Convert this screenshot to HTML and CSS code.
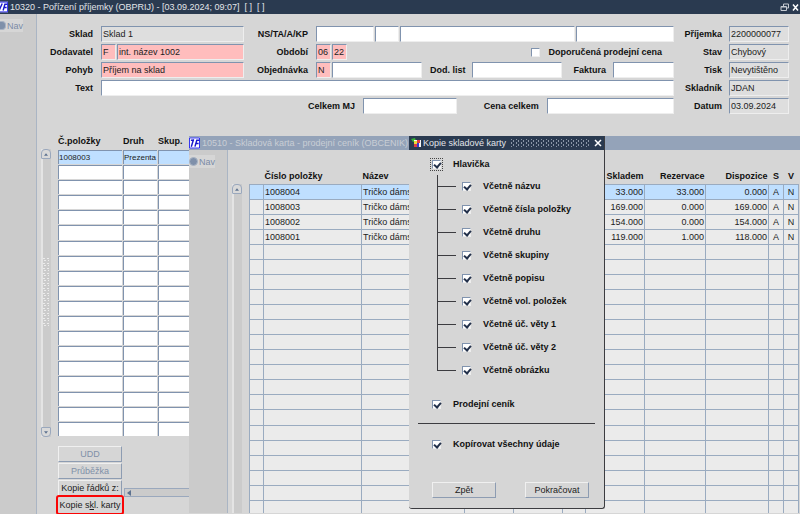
FILE: index.html
```
<!DOCTYPE html>
<html lang="cs">
<head>
    <meta charset="UTF-8">
    <meta name="viewport" content="width=device-width, initial-scale=1.0">
    <title>Pořízení příjemky</title>
    <link rel="stylesheet" href="styles.css">
</head>
<body>
<header class="titlebar">
    <svg class="logo" viewBox="3 0 9 12"><rect width="12" height="12" fill="#fff"/><path d="M5.500 2L2 10M6.500 10l2-7h3M7.500 6.500h3" stroke="#1a1acc" stroke-width="1.600" fill="none"/><path d="M0 .5h11.500v11H0" stroke="#1a1aee" fill="none"/></svg>
    <h1>10320 - Pořízení příjemky (OBPRIJ) - [03.09.2024; 09:07]&nbsp; [ ]&nbsp; [ ]</h1>
    <svg class="win-icons" viewBox="0 0 20 10"><path d="M3.500 4V2h5v4H7M1 4.500h5.500v4H1zM1 5h5" stroke="#c5cad2" fill="none"/><path d="M13 2.500l5 6M18 2.500l-5 6" stroke="#fff" stroke-width="1.500"/></svg>
</header>

<div class="app">
    <aside class="sidebar"><a href="#" class="nav-link nav-cut">Nav</a></aside>
    <main>
        <form class="receipt">
            <div class="fields">
                <div class="row">
                    <label for="sklad">Sklad</label>
                    <input id="sklad" class="gray" value="Sklad 1">
                    <label for="ns">NS/TA/A/KP</label>
                    <div class="group">
                        <input id="ns" class="w-ns"><input class="w-ta" aria-label="TA"><input class="w-a" aria-label="A"><input class="w-kp" aria-label="KP">
                    </div>
                </div>
                <div class="row">
                    <label for="dodavatel">Dodavatel</label>
                    <div class="group">
                        <input id="dodavatel" class="pink code" value="F"><input class="pink" aria-label="Název dodavatele" value="int. název 1002">
                    </div>
                    <label for="obdobi">Období</label>
                    <div class="group">
                        <input id="obdobi" class="pink code" value="06"><input class="pink code" aria-label="Rok" value="22">
                        <div class="check-right">
                            <input type="checkbox" id="cena">
                            <label for="cena">Doporučená prodejní cena</label>
                        </div>
                    </div>
                </div>
                <div class="row">
                    <label for="pohyb">Pohyb</label>
                    <input id="pohyb" class="pink" value="Příjem na sklad">
                    <label for="objednavka">Objednávka</label>
                    <div class="group">
                        <input id="objednavka" class="pink code" value="N"><input class="w-order" aria-label="Číslo objednávky">
                        <label for="list" class="w-label">Dod. list</label>
                        <input id="list" class="w-order">
                        <label for="faktura" class="w-label">Faktura</label>
                        <input id="faktura" class="w-invoice">
                    </div>
                </div>
                <div class="row row-text">
                    <label for="text">Text</label>
                    <input id="text">
                </div>
                <div class="row row-sum">
                    <label for="mj">Celkem MJ</label>
                    <input id="mj">
                    <label for="celkem">Cena celkem</label>
                    <input id="celkem">
                </div>
            </div>
            <div class="status">
                <label for="prijemka">Příjemka</label><input id="prijemka" class="gray" value="2200000077">
                <label for="stav">Stav</label><input id="stav" class="gray" value="Chybový">
                <label for="tisk">Tisk</label><input id="tisk" class="gray" value="Nevytištěno">
                <label for="skladnik">Skladník</label><input id="skladnik" class="gray" value="JDAN">
                <label for="datum">Datum</label><input id="datum" class="gray" value="03.09.2024">
            </div>
        </form>

        <div class="items">
            <div class="scroll">
                <span class="scroll-btn"><svg viewBox="0 0 6 4"><path d="M0 4l3-4 3 4z"/></svg></span>
                <span class="scroll-grip"></span>
                <span class="scroll-btn down"><svg viewBox="0 0 6 4"><path d="M0 0l3 4 3-4z"/></svg></span>
            </div>
            <table class="lines">
                <thead>
                    <tr><th>Č.položky</th><th>Druh</th><th>Skup.</th></tr>
                </thead>
                <tbody data-rows="19">
                    <tr class="selected"><td>1008003</td><td>Prezenta</td><td></td></tr>
                </tbody>
            </table>
        </div>

        <div class="actions">
            <div class="buttons">
                <button type="button" disabled>UDD</button>
                <button type="button" disabled>Průběžka</button>
                <button type="button">Kopie řádků z:</button>
                <button type="button" class="marked">Kopie s<u>k</u>l. karty</button>
            </div>
            <div class="hscroll"><svg viewBox="0 0 4 6"><path d="M4 0L0 3l4 3z"/></svg></div>
        </div>
    </main>
</div>

<!-- Window with the price list -->
<section class="window">
    <div class="titlebar inactive">
        <svg class="logo" viewBox="0 0 12 12"><rect width="12" height="12" fill="#fff"/><path d="M2 3h3.500M5 2L2.500 10M6.500 10l2-7h3M7.500 6.500h3" stroke="#1a1acc" stroke-width="1.600" fill="none"/><path d="M.5 .5h11v11H.5z" stroke="#1a1aee" fill="none"/></svg>
        <h2>10510 - Skladová karta - prodejní ceník (OBCENIK)</h2>
    </div>
    <div class="window-body">
        <aside class="sidebar"><a href="#" class="nav-link">Nav</a></aside>
        <div class="scroll">
            <span class="scroll-btn"><svg viewBox="0 0 6 4"><path d="M0 4l3-4 3 4z"/></svg></span>
        </div>
        <div class="prices-wrap">
            <table class="prices">
                <colgroup>
                    <col class="c-mark"><col class="c-number"><col><col class="c-mid"><col class="c-mid"><col class="c-small"><col class="c-stock"><col class="c-res"><col class="c-disp"><col class="c-flag"><col class="c-flag">
                </colgroup>
                <thead>
                    <tr><th></th><th>Číslo položky</th><th>Název</th><th></th><th></th><th></th><th class="num">Skladem</th><th class="num">Rezervace</th><th class="num">Dispozice</th><th class="mid">S</th><th class="mid">V</th></tr>
                </thead>
                <tbody data-rows="22">
                    <tr class="selected"><td></td><td>1008004</td><td>Tričko dámské</td><td></td><td></td><td></td><td class="num">33.000</td><td class="num">33.000</td><td class="num">0.000</td><td class="mid">A</td><td class="mid">N</td></tr>
                    <tr><td></td><td>1008003</td><td>Tričko dámské</td><td></td><td></td><td></td><td class="num">169.000</td><td class="num">0.000</td><td class="num">169.000</td><td class="mid">A</td><td class="mid">N</td></tr>
                    <tr><td></td><td>1008002</td><td>Tričko dámské</td><td></td><td></td><td></td><td class="num">154.000</td><td class="num">0.000</td><td class="num">154.000</td><td class="mid">A</td><td class="mid">N</td></tr>
                    <tr><td></td><td>1008001</td><td>Tričko dámské</td><td></td><td></td><td></td><td class="num">119.000</td><td class="num">1.000</td><td class="num">118.000</td><td class="mid">A</td><td class="mid">N</td></tr>
                </tbody>
            </table>
        </div>
    </div>
</section>

<!-- Copy dialog -->
<section class="dialog" role="dialog" aria-labelledby="dialog-title">
    <div class="titlebar">
        <svg class="java" viewBox="0 0 10 10"><path d="M0 1l4-1 1 3-3 1z" fill="#35b335"/><rect x="3" y="2" width="7" height="7" fill="#f4f4f4"/><path d="M3 3h3v3H3z" fill="#e8dc35"/><path d="M6 2h3v3H6z" fill="#e03a42"/><path d="M3 6h3v3H3z" fill="#e03a42"/><path d="M6 5h2v4H6z" fill="#3838cf"/></svg>
        <h2 id="dialog-title">Kopie skladové karty</h2>
        <span class="dots"></span>
        <svg class="close" viewBox="0 0 8 8"><path d="M1 1l6 6M7 1L1 7" stroke="#fff" stroke-width="1.500"/></svg>
    </div>
    <form class="dialog-body">
        <label class="option focused"><input type="checkbox" checked>Hlavička</label>
        <ul class="tree">
            <li><label><input type="checkbox" checked>Včetně názvu</label></li>
            <li><label><input type="checkbox" checked>Včetně čísla položky</label></li>
            <li><label><input type="checkbox" checked>Včetně druhu</label></li>
            <li><label><input type="checkbox" checked>Včetně skupiny</label></li>
            <li><label><input type="checkbox" checked>Včetně popisu</label></li>
            <li><label><input type="checkbox" checked>Včetně vol. položek</label></li>
            <li><label><input type="checkbox" checked>Včetně úč. věty 1</label></li>
            <li><label><input type="checkbox" checked>Včetně úč. věty 2</label></li>
            <li><label><input type="checkbox" checked>Včetně obrázku</label></li>
        </ul>
        <label class="option">
            <input type="checkbox" checked>Prodejní ceník
        </label>
        <hr>
        <label class="option">
            <input type="checkbox" checked>Kopírovat všechny údaje
        </label>
        <div class="dialog-buttons">
            <button type="button">Zpět</button>
            <button type="button">Pokračovat</button>
        </div>
    </form>
</section>

<script>
    // Fill the grids with empty rows
    document.querySelectorAll('tbody[data-rows]').forEach(function(body) {
        const columns = body.rows[0].cells.length;
        while (body.rows.length < Number(body.dataset.rows)) {
            const row = body.insertRow();
            for (let i = 0; i < columns; i++) {
                row.insertCell();
            }
        }
    });
</script>
</body>
</html>
```
FILE: styles.css
```
* {
    box-sizing: border-box;
}
body {
    margin: 0;
    height: 100vh;
    display: flex;
    flex-direction: column;
    position: relative;
    overflow: hidden;
    background: #d6d6d6;
    color: #1c1c22;
    font: 9px/12px "Liberation Sans", Arial, sans-serif;
}
label, th {
    font-weight: bold;
    color: #111;
    white-space: nowrap;
}
input, button {
    font: inherit;
    color: inherit;
}

/* Title bars */
.titlebar {
    display: flex;
    align-items: center;
    gap: 2px;
    height: 14px;
    flex: none;
    background: #2a3a50;
    color: #e2e5e9;
}
.titlebar h1, .titlebar h2 {
    margin: 0;
    font-size: 9px;
    line-height: 14px;
    font-weight: normal;
    white-space: nowrap;
}
.titlebar .logo {
    width: 8px;
    height: 12px;
}
.win-icons {
    width: 20px;
    height: 10px;
    margin-left: auto;
}

/* Main window */
.app {
    flex: 1;
    display: flex;
}
.sidebar {
    width: 37px;
    flex: none;
    padding-top: 5px;
    background: #cbcbcb;
    border-right: 1px solid #aab5c4;
}
.nav-link {
    display: flex;
    align-items: center;
    gap: 1px;
    width: 26px;
    height: 13px;
    background: #d6d6d6;
    color: #7a8ba6;
    text-decoration: none;
}
.nav-link::before {
    content: "";
    width: 7px;
    height: 7px;
    flex: none;
    border: 1px solid #a9b3c3;
    border-radius: 50%;
    background: #7f90aa;
}
.nav-cut {
    width: 23px;
}
.nav-cut::before {
    width: 5px;
    border-left: 0;
    border-radius: 0 4px 4px 0;
}
main {
    flex: 1;
    min-width: 0;
}

/* Form */
.receipt {
    display: flex;
    gap: 8px;
    padding: 12px 11px 0 0;
}
.fields {
    flex: 1;
    display: grid;
    gap: 2px;
}
.row {
    display: grid;
    grid-template-columns: 56px 143fr 56px 358fr;
    gap: 8px;
    align-items: center;
}
.row label, .status label {
    text-align: right;
}
.row-text {
    grid-template-columns: 56px 1fr;
}
.row-sum {
    grid-template-columns: 318px 95fr 74px 129fr;
}
.group {
    display: flex;
    align-items: center;
    gap: 1px;
}
input:not([type]) {
    width: 100%;
    min-width: 0;
    height: 16px;
    padding: 0 1px;
    border: 1px solid #eeeeee;
    border-top-color: #8093ae;
    border-left-color: #8093ae;
    border-radius: 0;
    background: #fff;
    outline: none;
}
input.gray {
    background: #dedede;
}
input.pink {
    background: #ffbdbd;
}
input.code {
    width: 15px;
    flex: none;
}
.group .w-ns {
    flex: 57;
}
.group .w-ta {
    flex: 21;
}
.group .w-a {
    flex: 180;
}
.group .w-kp {
    flex: 99;
}
.group .w-order {
    flex: 90;
}
.group .w-invoice {
    flex: 60;
}
.w-label {
    flex: 45;
    padding-right: 6px;
}
.check-right {
    display: flex;
    align-items: center;
    gap: 8px;
    margin-left: auto;
    margin-right: 12px;
}
.status {
    display: grid;
    grid-template-columns: 40px 60px;
    gap: 2px 7px;
    align-items: center;
}

/* Checkboxes */
input[type="checkbox"] {
    appearance: none;
    width: 9px;
    height: 9px;
    margin: 0;
    flex: none;
    position: relative;
    background: #fff;
    border: 1px solid #eeeeee;
    border-top-color: #8093ae;
    border-left-color: #8093ae;
}
input[type="checkbox"]:checked::after {
    content: "";
    position: absolute;
    left: 2px;
    top: 0;
    width: 3px;
    height: 5px;
    border: solid #22304a;
    border-width: 0 2px 2px 0;
    transform: rotate(40deg);
}

/* Item lines */
.items {
    display: flex;
    gap: 6px;
    margin-top: 20px;
    padding-left: 4px;
}
.scroll {
    display: flex;
    flex-direction: column;
    width: 10px;
    flex: none;
    background: #cbcbcb;
    border-left: 2px solid #e4e4e4;
}
.items .scroll {
    margin-top: 15px;
}
.scroll-btn {
    display: flex;
    align-items: center;
    justify-content: center;
    width: 10px;
    height: 10px;
    margin-left: -2px;
    background: #d9d9d9;
    border: 1px solid #9aa8bd;
    border-radius: 4px 4px 1px 1px;
}
.scroll-btn.down {
    border-radius: 1px 1px 4px 4px;
}
.scroll-btn svg {
    width: 4px;
    height: 3px;
    fill: #5d7290;
}
.scroll-grip {
    width: 6px;
    height: 70px;
    margin: auto 0;
    background: radial-gradient(circle, #ececec 1px, transparent 1px) 0 0 / 4px 5px,
        radial-gradient(circle, #ececec 1px, transparent 1px) 3px 3px / 4px 5px;
}
table {
    table-layout: fixed;
}
th, td {
    padding: 0 1px;
    text-align: left;
    font-size: 9px;
    line-height: 12px;
    white-space: nowrap;
    overflow: hidden;
}
.lines {
    width: 190px;
    height: 303px;
    border-spacing: 1px;
}
.lines th {
    height: 14px;
    padding: 0;
    vertical-align: top;
}
.lines th:nth-child(1) {
    width: 64px;
}
.lines th:nth-child(2) {
    width: 34px;
}
.lines td {
    height: 14px;
    padding: 0;
    background: #fff;
    border: 1px solid #8093ae;
    border-right: 0;
    border-bottom: 0;
    font-size: 8px;
}
.lines .selected td, .prices .selected td {
    background: #bfdfff;
}

/* Buttons */
button {
    padding: 0;
    background: #d6d6d6;
    border: 1px solid #f0f0f0;
    border-right-color: #8d9cb2;
    border-bottom-color: #8d9cb2;
    text-align: center;
    white-space: nowrap;
}
button:disabled {
    color: #8090a8;
}
.actions {
    display: flex;
    align-items: flex-end;
    gap: 2px;
    padding: 9px 0 0 21px;
}
.buttons {
    display: grid;
    gap: 1px;
    width: 64px;
    flex: none;
}
.buttons button {
    height: 16px;
}
.buttons .marked {
    border-color: #d6d6d6;
    outline: 2px solid #fa0505;
    border-radius: 1px;
}
.hscroll {
    display: flex;
    align-items: center;
    flex: 1;
    height: 9px;
    margin-bottom: 16px;
    padding-left: 2px;
    background: #cbcbcb;
    border: 1px solid #9aa8bd;
}
.hscroll svg {
    width: 4px;
    height: 6px;
    fill: #5d7290;
}

/* Price list window */
.window {
    position: absolute;
    left: 189px;
    right: 0;
    top: 136px;
    bottom: 1px;
    display: flex;
    flex-direction: column;
    background: #d6d6d6;
    overflow: hidden;
}
.titlebar.inactive {
    background: #94a3b9;
    color: #c9ced5;
}
.window .logo {
    width: 11px;
    height: 12px;
}
.window-body {
    flex: 1;
    min-height: 0;
    display: flex;
}
.window .sidebar {
    width: 39px;
}
.window .scroll {
    margin: 34px 7px 0 4px;
}
.prices-wrap {
    flex: 1;
    min-width: 0;
    overflow: hidden;
    padding: 19px 1px 0 0;
}
.prices {
    width: 100%;
    height: 347px;
    border-collapse: collapse;
}
.prices th {
    height: 15px;
}
.prices td {
    height: 15px;
    background: #ebebeb;
    border: 1px solid #9aabc0;
}
.c-mark {
    width: 14px;
}
.c-number {
    width: 98px;
}
.c-mid {
    width: 49px;
}
.c-small {
    width: 23px;
}
.c-stock {
    width: 59px;
}
.c-res {
    width: 61px;
}
.c-disp {
    width: 63px;
}
.c-flag {
    width: 15px;
}
.prices .num {
    text-align: right;
}
.prices .mid {
    text-align: center;
}

/* Dialog */
.dialog {
    position: absolute;
    left: 409px;
    top: 136px;
    width: 196px;
    background: #d6d6d6;
    border: solid #3c3c40;
    border-width: 0 1px 1px 0;
    border-radius: 0 0 3px 3px;
}
.java {
    width: 10px;
    height: 10px;
    margin-left: 2px;
}
.dots {
    flex: 1;
    height: 8px;
    margin: 0 3px;
    background: radial-gradient(circle, #8b97a8 1px, transparent 1px) 0 0 / 5px 4px,
        radial-gradient(circle, #8b97a8 1px, transparent 1px) 3px 2px / 5px 4px;
}
.close {
    width: 8px;
    height: 8px;
    margin-right: 2px;
}
.dialog-body {
    padding: 8px 9px 10px;
}
.option, .tree label {
    display: flex;
    align-items: center;
    gap: 12px;
    height: 12px;
    margin-left: 14px;
}
.focused input {
    outline: 1px dotted #444;
    outline-offset: 1px;
}
.tree {
    list-style: none;
    margin: 5px 0 27px 19px;
    padding: 0;
}
.tree li {
    position: relative;
    height: 23px;
    padding-top: 5px;
    border-left: 1px solid #3c3c40;
}
.tree li::before {
    content: "";
    position: absolute;
    left: 0;
    top: 11px;
    width: 18px;
    border-top: 1px solid #3c3c40;
}
.tree li:last-child {
    height: 12px;
}
.tree label {
    margin-left: 24px;
}
.dialog hr {
    margin: 13px 0 14px;
    border: 0;
    border-top: 1px solid #3c3c40;
}
.dialog-buttons {
    display: flex;
    justify-content: space-between;
    margin: 32px 6px 0 14px;
}
.dialog-buttons button {
    width: 64px;
    height: 16px;
}
```
